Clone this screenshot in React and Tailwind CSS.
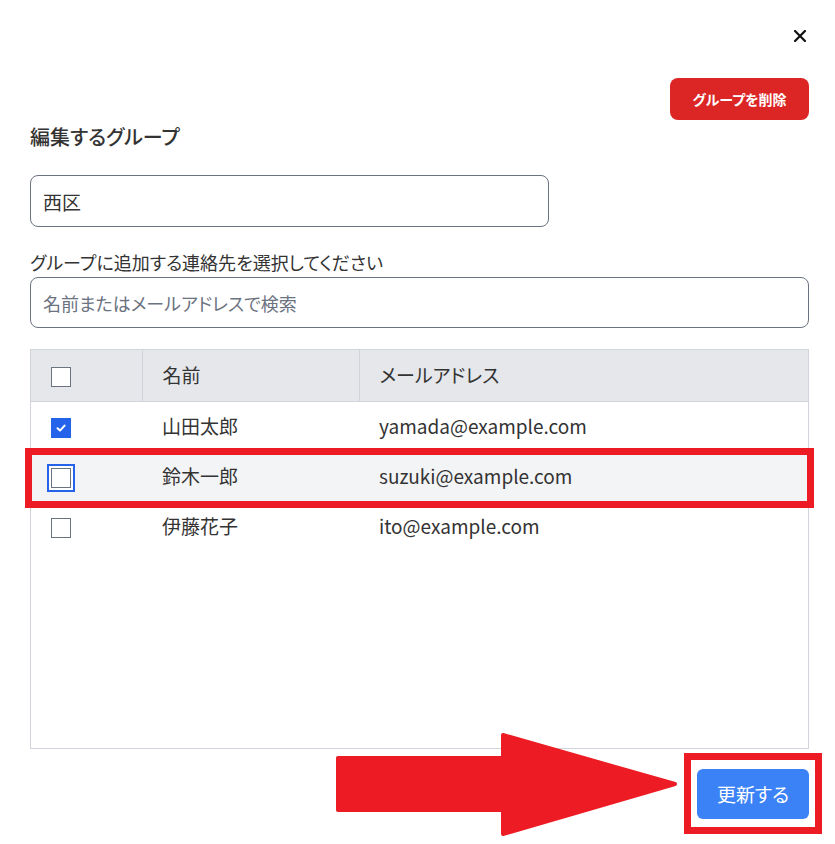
import { useState } from 'react';

const contacts = [
  { id: 1, name: '山田太郎', email: 'yamada@example.com', checked: true },
  { id: 2, name: '鈴木一郎', email: 'suzuki@example.com', checked: false, focused: true },
  { id: 3, name: '伊藤花子', email: 'ito@example.com', checked: false },
];

const Checkbox = ({ checked, focused }) => (
  <div
    className={`w-5 h-5 flex items-center justify-center ${
      checked ? 'bg-[#2563eb] border border-[#2563eb]' : 'bg-white border border-[#6b7280]'
    } ${focused ? 'ring-2 ring-[#2563eb] ring-offset-2' : ''}`}
  >
    {checked && (
      <svg width="12" height="12" viewBox="0 0 12 12" fill="none">
        <path d="M2.5 6.3 L5 8.6 L9.6 3.6" stroke="white" strokeWidth="2" strokeLinecap="round" strokeLinejoin="round" />
      </svg>
    )}
  </div>
);

const App = () => {
  const [groupName, setGroupName] = useState('西区');
  const [query, setQuery] = useState('');

  return (
    <div className="relative w-[835px] h-[844px] bg-white overflow-hidden font-['Noto_Sans_CJK_JP',sans-serif] [font-feature-settings:'palt'] text-[#333]">
      <div className="pl-[30px] pr-[26px]">
        {/* close */}
        <div className="flex justify-end pt-[30px] pr-[3px]">
          <button type="button" className="w-[12px] h-[12px]">
            <svg width="12" height="12" viewBox="0 0 12 12" fill="none">
              <path d="M1 1 L11 11 M11 1 L1 11" stroke="#111" strokeWidth="2.2" strokeLinecap="square" />
            </svg>
          </button>
        </div>

        <div className="flex justify-end mt-[36px]">
          <button
            type="button"
            className="w-[139px] h-[42px] rounded-lg bg-[#dc2626] text-white text-[14px] font-bold"
          >
            グループを削除
          </button>
        </div>

        <h2 className="mt-[3px] text-[20px] leading-[28px] font-medium text-[#333]">編集するグループ</h2>

        <input
          type="text"
          value={groupName}
          onChange={(e) => setGroupName(e.target.value)}
          className="mt-[24px] block w-[519px] h-[52px] px-3 border border-[#6b7280] rounded-lg text-[19px] text-[#333] outline-none"
        />

        <label className="block mt-[23px] text-[18px] leading-[24px] text-[#333]">
          グループに追加する連絡先を選択してください
        </label>
        <input
          type="text"
          value={query}
          onChange={(e) => setQuery(e.target.value)}
          placeholder="名前またはメールアドレスで検索"
          className="mt-[3px] block w-full h-[51px] px-3 border border-[#6b7280] rounded-lg text-[18px] text-[#333] placeholder-[#6b7280] outline-none"
        />

        <div className="mt-[21px] h-[400px] border border-[#d1d5db] overflow-hidden">
          <table className="w-full border-collapse text-[19px]">
            <thead>
              <tr className="h-[51px] bg-[#e5e7eb] border-b border-[#d1d5db]">
                <th className="w-[111px] pl-5 border-r border-[#d1d5db] text-left font-normal">
                  <div className="mt-[3px]">
                    <Checkbox checked={false} />
                  </div>
                </th>
                <th className="w-[217px] pl-5 border-r border-[#d1d5db] text-left font-normal">名前</th>
                <th className="pl-5 text-left font-normal">メールアドレス</th>
              </tr>
            </thead>
            <tbody>
              {contacts.map((c) => (
                <tr key={c.id} className={`h-[50px] ${c.focused ? 'bg-[#f3f4f6]' : 'bg-white'}`}>
                  <td className="pl-5">
                    <div className="mt-[3px]">
                      <Checkbox checked={c.checked} focused={c.focused} />
                    </div>
                  </td>
                  <td className="pl-5">{c.name}</td>
                  <td className="pl-5">{c.email}</td>
                </tr>
              ))}
            </tbody>
          </table>
        </div>

        <div className="flex justify-end mt-[20px]">
          <button
            type="button"
            className="w-[112px] h-[50px] rounded-md bg-[#3b82f6] text-white text-[19px]"
          >
            更新する
          </button>
        </div>
      </div>

      {/* annotation: highlighted row */}
      <div className="absolute left-[25px] top-[448px] w-[789px] h-[60px] border-[7px] border-[#ed1c24] pointer-events-none" />

      {/* annotation: arrow */}
      <svg className="absolute left-0 top-0 pointer-events-none" width="835" height="844">
        <path
          d="M338 758 L503 758 L503 735 L675 784 L503 834 L503 810 L338 810 Z"
          fill="#ed1c24"
          stroke="#ed1c24"
          strokeWidth="4"
          strokeLinejoin="round"
        />
      </svg>

      {/* annotation: update button */}
      <div className="absolute left-[684px] top-[753px] w-[138px] h-[81px] border-[7px] border-[#ed1c24] pointer-events-none" />
    </div>
  );
};

export default App;
